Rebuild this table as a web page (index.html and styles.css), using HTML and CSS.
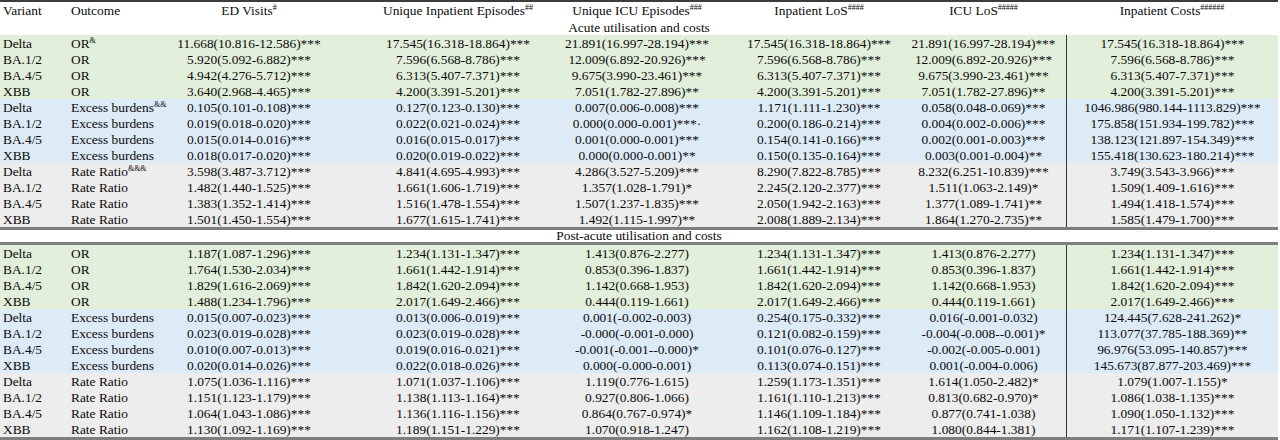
FILE: index.html
```html
<!DOCTYPE html>
<html lang="en">
<head>
<meta charset="utf-8">
<title>Table</title>
<link rel="stylesheet" href="styles.css">
</head>
<body>
<table class="tbl">
<colgroup>
<col class="c-var"><col class="c-out"><col class="c-ed"><col class="c-uip"><col class="c-uicu"><col class="c-ilos"><col class="c-iculos"><col class="c-cost">
</colgroup>
<thead>
<tr class="head">
<th class="l">Variant</th><th class="l">Outcome</th>
<th class="ed">ED Visits<sup>#</sup></th>
<th class="uip">Unique Inpatient Episodes<sup>##</sup></th>
<th class="uicu">Unique ICU Episodes<sup>###</sup></th>
<th class="ilos">Inpatient LoS<sup>####</sup></th>
<th class="iculos">ICU LoS<sup>#####</sup></th>
<th class="cost">Inpatient Costs<sup>######</sup></th>
</tr>
</thead>
<tbody>
<tr class="sec"><td colspan="8">Acute utilisation and costs</td></tr>
<tr class="g"><td>Delta</td><td>OR<sup>&amp;</sup></td><td class="ed">11.668(10.816-12.586)***</td><td class="uip">17.545(16.318-18.864)***</td><td class="uicu">21.891(16.997-28.194)***</td><td class="ilos">17.545(16.318-18.864)***</td><td class="iculos">21.891(16.997-28.194)***</td><td class="cost">17.545(16.318-18.864)***</td></tr>
<tr class="g"><td>BA.1/2</td><td>OR</td><td class="ed">5.920(5.092-6.882)***</td><td class="uip">7.596(6.568-8.786)***</td><td class="uicu">12.009(6.892-20.926)***</td><td class="ilos">7.596(6.568-8.786)***</td><td class="iculos">12.009(6.892-20.926)***</td><td class="cost">7.596(6.568-8.786)***</td></tr>
<tr class="g"><td>BA.4/5</td><td>OR</td><td class="ed">4.942(4.276-5.712)***</td><td class="uip">6.313(5.407-7.371)***</td><td class="uicu">9.675(3.990-23.461)***</td><td class="ilos">6.313(5.407-7.371)***</td><td class="iculos">9.675(3.990-23.461)***</td><td class="cost">6.313(5.407-7.371)***</td></tr>
<tr class="g"><td>XBB</td><td>OR</td><td class="ed">3.640(2.968-4.465)***</td><td class="uip">4.200(3.391-5.201)***</td><td class="uicu">7.051(1.782-27.896)**</td><td class="ilos">4.200(3.391-5.201)***</td><td class="iculos">7.051(1.782-27.896)**</td><td class="cost">4.200(3.391-5.201)***</td></tr>
<tr class="b"><td>Delta</td><td>Excess burdens<sup>&amp;&amp;</sup></td><td class="ed">0.105(0.101-0.108)***</td><td class="uip">0.127(0.123-0.130)***</td><td class="uicu">0.007(0.006-0.008)***</td><td class="ilos">1.171(1.111-1.230)***</td><td class="iculos">0.058(0.048-0.069)***</td><td class="cost">1046.986(980.144-1113.829)***</td></tr>
<tr class="b"><td>BA.1/2</td><td>Excess burdens</td><td class="ed">0.019(0.018-0.020)***</td><td class="uip">0.022(0.021-0.024)***</td><td class="uicu">0.000(0.000-0.001)***&middot;</td><td class="ilos">0.200(0.186-0.214)***</td><td class="iculos">0.004(0.002-0.006)***</td><td class="cost">175.858(151.934-199.782)***</td></tr>
<tr class="b"><td>BA.4/5</td><td>Excess burdens</td><td class="ed">0.015(0.014-0.016)***</td><td class="uip">0.016(0.015-0.017)***</td><td class="uicu">0.001(0.000-0.001)***</td><td class="ilos">0.154(0.141-0.166)***</td><td class="iculos">0.002(0.001-0.003)***</td><td class="cost">138.123(121.897-154.349)***</td></tr>
<tr class="b"><td>XBB</td><td>Excess burdens</td><td class="ed">0.018(0.017-0.020)***</td><td class="uip">0.020(0.019-0.022)***</td><td class="uicu">0.000(0.000-0.001)**</td><td class="ilos">0.150(0.135-0.164)***</td><td class="iculos">0.003(0.001-0.004)**</td><td class="cost">155.418(130.623-180.214)***</td></tr>
<tr class="r"><td>Delta</td><td>Rate Ratio<sup>&amp;&amp;&amp;</sup></td><td class="ed">3.598(3.487-3.712)***</td><td class="uip">4.841(4.695-4.993)***</td><td class="uicu">4.286(3.527-5.209)***</td><td class="ilos">8.290(7.822-8.785)***</td><td class="iculos">8.232(6.251-10.839)***</td><td class="cost">3.749(3.543-3.966)***</td></tr>
<tr class="r"><td>BA.1/2</td><td>Rate Ratio</td><td class="ed">1.482(1.440-1.525)***</td><td class="uip">1.661(1.606-1.719)***</td><td class="uicu">1.357(1.028-1.791)*</td><td class="ilos">2.245(2.120-2.377)***</td><td class="iculos">1.511(1.063-2.149)*</td><td class="cost">1.509(1.409-1.616)***</td></tr>
<tr class="r"><td>BA.4/5</td><td>Rate Ratio</td><td class="ed">1.383(1.352-1.414)***</td><td class="uip">1.516(1.478-1.554)***</td><td class="uicu">1.507(1.237-1.835)***</td><td class="ilos">2.050(1.942-2.163)***</td><td class="iculos">1.377(1.089-1.741)**</td><td class="cost">1.494(1.418-1.574)***</td></tr>
<tr class="r"><td>XBB</td><td>Rate Ratio</td><td class="ed">1.501(1.450-1.554)***</td><td class="uip">1.677(1.615-1.741)***</td><td class="uicu">1.492(1.115-1.997)**</td><td class="ilos">2.008(1.889-2.134)***</td><td class="iculos">1.864(1.270-2.735)**</td><td class="cost">1.585(1.479-1.700)***</td></tr>
<tr class="sec sec2"><td colspan="8">Post-acute utilisation and costs</td></tr>
<tr class="g"><td>Delta</td><td>OR</td><td class="ed">1.187(1.087-1.296)***</td><td class="uip">1.234(1.131-1.347)***</td><td class="uicu">1.413(0.876-2.277)</td><td class="ilos">1.234(1.131-1.347)***</td><td class="iculos">1.413(0.876-2.277)</td><td class="cost">1.234(1.131-1.347)***</td></tr>
<tr class="g"><td>BA.1/2</td><td>OR</td><td class="ed">1.764(1.530-2.034)***</td><td class="uip">1.661(1.442-1.914)***</td><td class="uicu">0.853(0.396-1.837)</td><td class="ilos">1.661(1.442-1.914)***</td><td class="iculos">0.853(0.396-1.837)</td><td class="cost">1.661(1.442-1.914)***</td></tr>
<tr class="g"><td>BA.4/5</td><td>OR</td><td class="ed">1.829(1.616-2.069)***</td><td class="uip">1.842(1.620-2.094)***</td><td class="uicu">1.142(0.668-1.953)</td><td class="ilos">1.842(1.620-2.094)***</td><td class="iculos">1.142(0.668-1.953)</td><td class="cost">1.842(1.620-2.094)***</td></tr>
<tr class="g"><td>XBB</td><td>OR</td><td class="ed">1.488(1.234-1.796)***</td><td class="uip">2.017(1.649-2.466)***</td><td class="uicu">0.444(0.119-1.661)</td><td class="ilos">2.017(1.649-2.466)***</td><td class="iculos">0.444(0.119-1.661)</td><td class="cost">2.017(1.649-2.466)***</td></tr>
<tr class="b"><td>Delta</td><td>Excess burdens</td><td class="ed">0.015(0.007-0.023)***</td><td class="uip">0.013(0.006-0.019)***</td><td class="uicu">0.001(-0.002-0.003)</td><td class="ilos">0.254(0.175-0.332)***</td><td class="iculos">0.016(-0.001-0.032)</td><td class="cost">124.445(7.628-241.262)*</td></tr>
<tr class="b"><td>BA.1/2</td><td>Excess burdens</td><td class="ed">0.023(0.019-0.028)***</td><td class="uip">0.023(0.019-0.028)***</td><td class="uicu">-0.000(-0.001-0.000)</td><td class="ilos">0.121(0.082-0.159)***</td><td class="iculos">-0.004(-0.008--0.001)*</td><td class="cost">113.077(37.785-188.369)**</td></tr>
<tr class="b"><td>BA.4/5</td><td>Excess burdens</td><td class="ed">0.010(0.007-0.013)***</td><td class="uip">0.019(0.016-0.021)***</td><td class="uicu">-0.001(-0.001--0.000)*</td><td class="ilos">0.101(0.076-0.127)***</td><td class="iculos">-0.002(-0.005-0.001)</td><td class="cost">96.976(53.095-140.857)***</td></tr>
<tr class="b"><td>XBB</td><td>Excess burdens</td><td class="ed">0.020(0.014-0.026)***</td><td class="uip">0.022(0.018-0.026)***</td><td class="uicu">0.000(-0.000-0.001)</td><td class="ilos">0.113(0.074-0.151)***</td><td class="iculos">0.001(-0.004-0.006)</td><td class="cost">145.673(87.877-203.469)***</td></tr>
<tr class="r"><td>Delta</td><td>Rate Ratio</td><td class="ed">1.075(1.036-1.116)***</td><td class="uip">1.071(1.037-1.106)***</td><td class="uicu">1.119(0.776-1.615)</td><td class="ilos">1.259(1.173-1.351)***</td><td class="iculos">1.614(1.050-2.482)*</td><td class="cost">1.079(1.007-1.155)*</td></tr>
<tr class="r"><td>BA.1/2</td><td>Rate Ratio</td><td class="ed">1.151(1.123-1.179)***</td><td class="uip">1.138(1.113-1.164)***</td><td class="uicu">0.927(0.806-1.066)</td><td class="ilos">1.161(1.110-1.213)***</td><td class="iculos">0.813(0.682-0.970)*</td><td class="cost">1.086(1.038-1.135)***</td></tr>
<tr class="r"><td>BA.4/5</td><td>Rate Ratio</td><td class="ed">1.064(1.043-1.086)***</td><td class="uip">1.136(1.116-1.156)***</td><td class="uicu">0.864(0.767-0.974)*</td><td class="ilos">1.146(1.109-1.184)***</td><td class="iculos">0.877(0.741-1.038)</td><td class="cost">1.090(1.050-1.132)***</td></tr>
<tr class="r"><td>XBB</td><td>Rate Ratio</td><td class="ed">1.130(1.092-1.169)***</td><td class="uip">1.189(1.151-1.229)***</td><td class="uicu">1.070(0.918-1.247)</td><td class="ilos">1.162(1.108-1.219)***</td><td class="iculos">1.080(0.844-1.381)</td><td class="cost">1.171(1.107-1.239)***</td></tr>
</tbody>
</table>
</body>
</html>
```
FILE: styles.css
```css
html, body {
  margin: 0;
  padding: 0;
  background: #ffffff;
}
body {
  font-family: "Liberation Serif", "Times New Roman", serif;
  font-size: 13.4px;
  color: #0a0a0a;
}
.tbl {
  width: 1278px;
  border-collapse: separate;
  border-spacing: 0;
  table-layout: fixed;
  border-bottom: 3px solid #7e7e7e;
}
.c-var { width: 68px; }
.c-out { width: 97px; }
.c-ed { width: 188px; }
.c-uip { width: 194px; }
.c-uicu { width: 180px; }
.c-ilos { width: 174px; }
.c-iculos { width: 165px; }
.c-cost { width: 212px; }

.tbl th, .tbl td {
  box-sizing: border-box;
  padding: 0;
  white-space: nowrap;
  line-height: 15px;
  height: 16px;
  font-weight: normal;
  text-align: center;
  overflow: visible;
}
.tbl th.l { text-align: left; padding-left: 3px; }
.tbl td:nth-child(1), .tbl td:nth-child(2) { text-align: left; padding-left: 3px; }
.head th {
  height: 19px;
  border-top: 2px solid #3c3c3c;
  padding-bottom: 1px;
}

.ed { padding-right: 20px !important; }
.uip { padding-left: 16px !important; }
.ilos { padding-left: 10px !important; }

sup {
  font-size: 8px;
  line-height: 0;
  vertical-align: 5px;
}

.sec td {
  text-align: center !important;
  padding-left: 0 !important;
  height: 16px;
}
.sec2 td {
  border-top: 3px solid #7e7e7e;
  border-bottom: 3px solid #7e7e7e;
  height: 18px;
  line-height: 12px;
}
.g td { background: #e2efda; }
.b td { background: #ddebf7; }
.r td { background: #ededed; }
.g td.cost, .b td.cost, .r td.cost { border-left: 1px solid #333; }
```
